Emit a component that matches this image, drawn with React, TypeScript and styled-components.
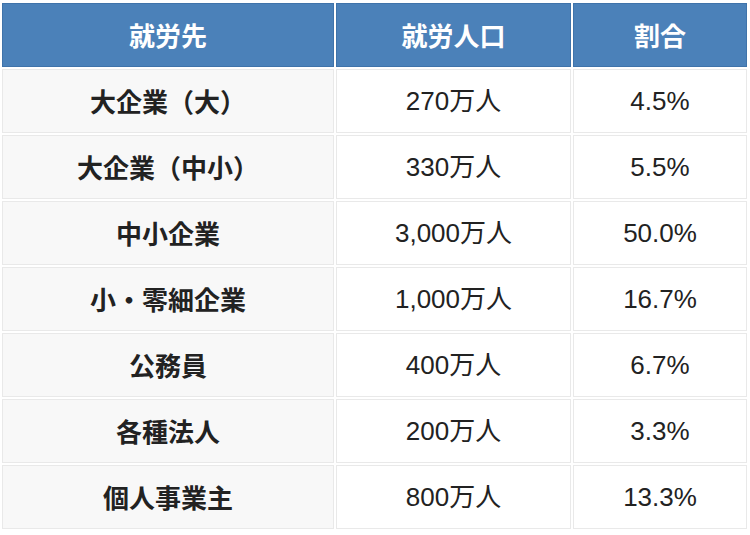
import React from "react";
import styled, { createGlobalStyle } from "styled-components";

const Global = createGlobalStyle`
  html, body { margin: 0; padding: 0; background: #ffffff; }
  body { font-family: "Liberation Sans", "Noto Sans CJK JP", sans-serif; }
`;

const Wrap = styled.div`
  width: 750px;
  height: 535px;
  background: #ffffff;
  padding: 1px 0 0 0;
  box-sizing: border-box;
`;

const Table = styled.table`
  border-collapse: separate;
  border-spacing: 2px;
  width: 749px;
  table-layout: fixed;
`;

const Th = styled.th<{ $w: number }>`
  width: ${(p) => p.$w}px;
  height: 64px;
  box-sizing: border-box;
  background: #4b81b9;
  border: 1px solid #3f73aa;
  color: #ffffff;
  font-size: 26px;
  line-height: 36px;
  font-weight: 700;
  text-align: center;
  padding: 0;
  font-family: "Noto Sans CJK JP", sans-serif;
`;

const Td = styled.td<{ $head?: boolean }>`
  height: 64px;
  box-sizing: border-box;
  background: ${(p) => (p.$head ? "#f8f8f8" : "#ffffff")};
  border: 1px solid #e9e9e9;
  color: #222222;
  font-size: 26px;
  line-height: 36px;
  font-weight: ${(p) => (p.$head ? 700 : 400)};
  text-align: center;
  padding: 0;
  font-family: ${(p) =>
    p.$head
      ? `"Noto Sans CJK JP", sans-serif`
      : `"Liberation Sans", "Noto Sans CJK JP", sans-serif`};
`;

const rows = [
  ["大企業（大）", "270万人", "4.5%"],
  ["大企業（中小）", "330万人", "5.5%"],
  ["中小企業", "3,000万人", "50.0%"],
  ["小・零細企業", "1,000万人", "16.7%"],
  ["公務員", "400万人", "6.7%"],
  ["各種法人", "200万人", "3.3%"],
  ["個人事業主", "800万人", "13.3%"],
];

export default function App() {
  return (
    <Wrap>
      <Global />
      <Table>
        <thead>
          <tr>
            <Th $w={332}>就労先</Th>
            <Th $w={235}>就労人口</Th>
            <Th $w={174}>割合</Th>
          </tr>
        </thead>
        <tbody>
          {rows.map((r) => (
            <tr key={r[0]}>
              <Td $head>{r[0]}</Td>
              <Td>{r[1]}</Td>
              <Td>{r[2]}</Td>
            </tr>
          ))}
        </tbody>
      </Table>
    </Wrap>
  );
}
